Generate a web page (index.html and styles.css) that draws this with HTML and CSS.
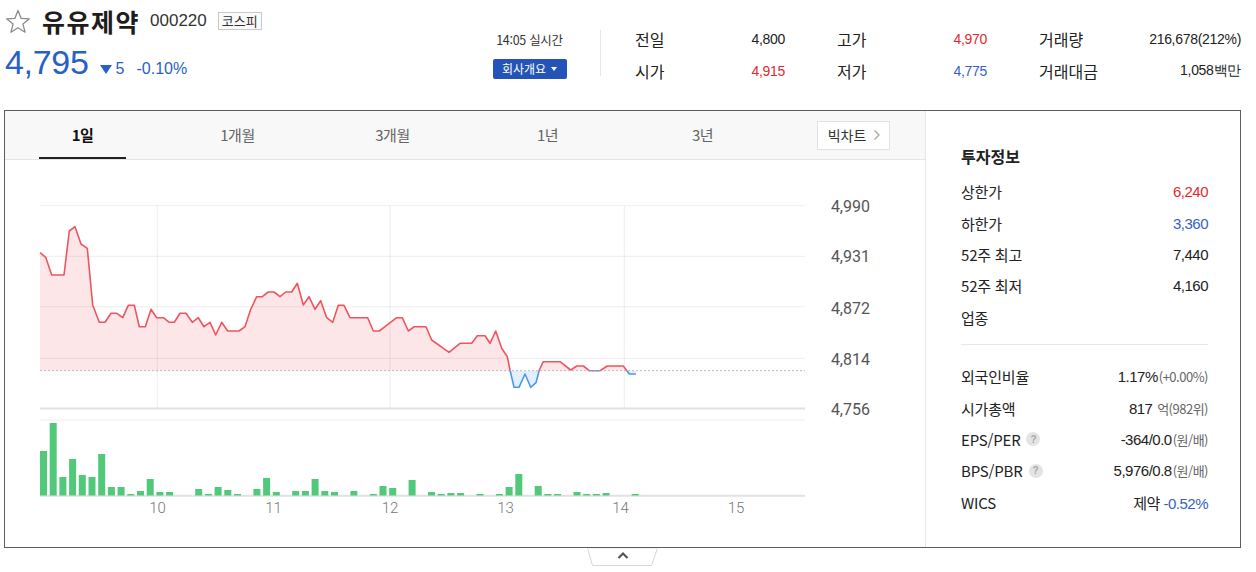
FILE: index.html
```html
<!DOCTYPE html>
<html lang="ko">
<head>
<meta charset="utf-8">
<title>유유제약</title>
<link rel="stylesheet" href="styles.css">
</head>
<body>
<header class="top">
  <div class="ident">
    <div class="name-row">
      <svg class="star" width="26" height="25" viewBox="0 0 26 25"><polygon points="13,1.5 16.06,9.29 24.41,9.79 17.95,15.11 20.05,23.21 13,18.7 5.95,23.21 8.05,15.11 1.59,9.79 9.94,9.29" fill="none" stroke="#8a8a8a" stroke-width="1.3" stroke-linejoin="round"/></svg>
      <h1 class="name">유유제약</h1>
      <span class="code">000220</span>
      <span class="market">코스피</span>
    </div>
    <div class="price-row">
      <span class="price">4,795</span>
      <span class="tri"></span>
      <span class="chg">5</span>
      <span class="rate">-0.10%</span>
    </div>
  </div>
  <div class="rt">
    <div class="time">14:05 실시간</div>
    <button class="corp">회사개요 <span class="caret"></span></button>
  </div>
  <div class="vdiv"></div>
  <div class="stats">
    <div class="stat"><span class="lbl">전일</span><span class="val">4,800</span></div>
    <div class="stat"><span class="lbl">고가</span><span class="val up">4,970</span></div>
    <div class="stat"><span class="lbl">거래량</span><span class="val">216,678(212%)</span></div>
    <div class="stat"><span class="lbl">시가</span><span class="val up">4,915</span></div>
    <div class="stat"><span class="lbl">저가</span><span class="val dn">4,775</span></div>
    <div class="stat"><span class="lbl">거래대금</span><span class="val">1,058백만</span></div>
  </div>
</header>

<section class="panel">
  <div class="chart-col">
    <nav class="tabs">
      <div class="tab on"><span class="tab-label">1일</span></div>
      <div class="tab"><span class="tab-label">1개월</span></div>
      <div class="tab"><span class="tab-label">3개월</span></div>
      <div class="tab"><span class="tab-label">1년</span></div>
      <div class="tab"><span class="tab-label">3년</span></div>
      <button class="big">빅차트 <svg width="8" height="12" viewBox="0 0 8 12"><polyline points="1.5,1.5 6,6 1.5,10.5" fill="none" stroke="#a5a5a5" stroke-width="1.3"/></svg></button>
    </nav>
    <svg class="chart" width="920" height="387" viewBox="5 160 920 387">
      <defs>
        <clipPath id="cu"><rect x="0" y="150" width="930" height="220.7"/></clipPath>
        <clipPath id="cd"><rect x="0" y="370.7" width="930" height="200"/></clipPath>
      </defs>
      <polygon clip-path="url(#cu)" fill="#fde6e8" points="40,370.7 40,252.7 45.7,257.3 51.7,275 64,275 69.3,231 75,226.7 81,244 87.3,248.3 92.7,305 99.3,322.3 105,322.3 111,313.3 116.7,313.3 122.7,317.7 128.3,305.3 134.3,305.3 139.3,326.7 145.3,326.7 151,309.3 156.7,317.7 163.3,317.7 169.3,322.3 174.3,322.3 180,313.3 186,313.3 192.3,322.3 198.3,317.7 204,326.7 210,322.3 215.7,335 221.7,322.3 227.7,331 239,331 245,326.7 250.7,309.3 256.7,296.7 262.3,296.7 268.3,292 274,292 280,296.7 285.7,292 291.7,292 297.3,283.3 303.3,305 309,296.7 315,309.3 320.7,300.7 326.7,317.7 332.7,322.3 338.3,305.3 344,305.3 350,317.7 367.7,317.7 373.3,331 379.3,331 385,326.7 396.7,317.7 402.3,317.7 408.3,331 414.3,326.7 426,326.7 431.7,340 449,352.3 460,343.3 471.7,343.3 477.3,335.7 485,335.7 490,343.3 495.7,331 501.7,348.3 507.3,356.7 510,370 514,387.3 519,387.3 525,374 530.7,387.3 536,382.7 539.3,370 543.3,361.7 560,361.7 570.7,370 576.7,366 583.3,366 589.3,370.7 600,370.7 607.3,366 623.3,366 629.3,374 636,374 636,370.7"/>
      <polygon clip-path="url(#cd)" fill="#e3effc" points="40,370.7 40,252.7 45.7,257.3 51.7,275 64,275 69.3,231 75,226.7 81,244 87.3,248.3 92.7,305 99.3,322.3 105,322.3 111,313.3 116.7,313.3 122.7,317.7 128.3,305.3 134.3,305.3 139.3,326.7 145.3,326.7 151,309.3 156.7,317.7 163.3,317.7 169.3,322.3 174.3,322.3 180,313.3 186,313.3 192.3,322.3 198.3,317.7 204,326.7 210,322.3 215.7,335 221.7,322.3 227.7,331 239,331 245,326.7 250.7,309.3 256.7,296.7 262.3,296.7 268.3,292 274,292 280,296.7 285.7,292 291.7,292 297.3,283.3 303.3,305 309,296.7 315,309.3 320.7,300.7 326.7,317.7 332.7,322.3 338.3,305.3 344,305.3 350,317.7 367.7,317.7 373.3,331 379.3,331 385,326.7 396.7,317.7 402.3,317.7 408.3,331 414.3,326.7 426,326.7 431.7,340 449,352.3 460,343.3 471.7,343.3 477.3,335.7 485,335.7 490,343.3 495.7,331 501.7,348.3 507.3,356.7 510,370 514,387.3 519,387.3 525,374 530.7,387.3 536,382.7 539.3,370 543.3,361.7 560,361.7 570.7,370 576.7,366 583.3,366 589.3,370.7 600,370.7 607.3,366 623.3,366 629.3,374 636,374 636,370.7"/>
      <g class="grid">
        <line x1="40" y1="205.7" x2="805" y2="205.7"/>
        <line x1="40" y1="256.3" x2="805" y2="256.3"/>
        <line x1="40" y1="306.7" x2="805" y2="306.7"/>
        <line x1="40" y1="358.3" x2="805" y2="358.3"/>
        <line x1="157.3" y1="206" x2="157.3" y2="408"/>
        <line x1="390" y1="206" x2="390" y2="408"/>
        <line x1="624.3" y1="206" x2="624.3" y2="408"/>
        <line x1="40" y1="420" x2="805" y2="420"/>
      </g>
      <g class="axis">
        <line x1="40" y1="408.5" x2="805" y2="408.5"/>
        <line x1="40" y1="495.8" x2="805" y2="495.8"/>
      </g>
      <line class="base" x1="40" y1="370.7" x2="805" y2="370.7"/>
      <polyline clip-path="url(#cu)" class="ln-up" points="40,252.7 45.7,257.3 51.7,275 64,275 69.3,231 75,226.7 81,244 87.3,248.3 92.7,305 99.3,322.3 105,322.3 111,313.3 116.7,313.3 122.7,317.7 128.3,305.3 134.3,305.3 139.3,326.7 145.3,326.7 151,309.3 156.7,317.7 163.3,317.7 169.3,322.3 174.3,322.3 180,313.3 186,313.3 192.3,322.3 198.3,317.7 204,326.7 210,322.3 215.7,335 221.7,322.3 227.7,331 239,331 245,326.7 250.7,309.3 256.7,296.7 262.3,296.7 268.3,292 274,292 280,296.7 285.7,292 291.7,292 297.3,283.3 303.3,305 309,296.7 315,309.3 320.7,300.7 326.7,317.7 332.7,322.3 338.3,305.3 344,305.3 350,317.7 367.7,317.7 373.3,331 379.3,331 385,326.7 396.7,317.7 402.3,317.7 408.3,331 414.3,326.7 426,326.7 431.7,340 449,352.3 460,343.3 471.7,343.3 477.3,335.7 485,335.7 490,343.3 495.7,331 501.7,348.3 507.3,356.7 510,370 514,387.3 519,387.3 525,374 530.7,387.3 536,382.7 539.3,370 543.3,361.7 560,361.7 570.7,370 576.7,366 583.3,366 589.3,370.7 600,370.7 607.3,366 623.3,366 629.3,374 636,374"/>
      <polyline clip-path="url(#cd)" class="ln-dn" points="40,252.7 45.7,257.3 51.7,275 64,275 69.3,231 75,226.7 81,244 87.3,248.3 92.7,305 99.3,322.3 105,322.3 111,313.3 116.7,313.3 122.7,317.7 128.3,305.3 134.3,305.3 139.3,326.7 145.3,326.7 151,309.3 156.7,317.7 163.3,317.7 169.3,322.3 174.3,322.3 180,313.3 186,313.3 192.3,322.3 198.3,317.7 204,326.7 210,322.3 215.7,335 221.7,322.3 227.7,331 239,331 245,326.7 250.7,309.3 256.7,296.7 262.3,296.7 268.3,292 274,292 280,296.7 285.7,292 291.7,292 297.3,283.3 303.3,305 309,296.7 315,309.3 320.7,300.7 326.7,317.7 332.7,322.3 338.3,305.3 344,305.3 350,317.7 367.7,317.7 373.3,331 379.3,331 385,326.7 396.7,317.7 402.3,317.7 408.3,331 414.3,326.7 426,326.7 431.7,340 449,352.3 460,343.3 471.7,343.3 477.3,335.7 485,335.7 490,343.3 495.7,331 501.7,348.3 507.3,356.7 510,370 514,387.3 519,387.3 525,374 530.7,387.3 536,382.7 539.3,370 543.3,361.7 560,361.7 570.7,370 576.7,366 583.3,366 589.3,370.7 600,370.7 607.3,366 623.3,366 629.3,374 636,374"/>
      <g class="ylab">
        <text x="870" y="211.5">4,990</text>
        <text x="870" y="261.5">4,931</text>
        <text x="870" y="313.5">4,872</text>
        <text x="870" y="364.5">4,814</text>
        <text x="870" y="414.5">4,756</text>
      </g>
      <g class="vol">
        <rect x="40" y="451" width="7" height="44.5"/>
        <rect x="49.7" y="423" width="7" height="72.5"/>
        <rect x="59.4" y="477" width="7" height="18.5"/>
        <rect x="69.1" y="459" width="7" height="36.5"/>
        <rect x="78.8" y="475" width="7" height="20.5"/>
        <rect x="88.5" y="477" width="7" height="18.5"/>
        <rect x="98.2" y="454" width="7" height="41.5"/>
        <rect x="107.9" y="487" width="7" height="8.5"/>
        <rect x="117.6" y="487" width="7" height="8.5"/>
        <rect x="127.3" y="494" width="7" height="1.5"/>
        <rect x="137" y="491" width="7" height="4.5"/>
        <rect x="146.7" y="479" width="7" height="16.5"/>
        <rect x="156.4" y="492" width="7" height="3.5"/>
        <rect x="166.1" y="492" width="7" height="3.5"/>
        <rect x="195.2" y="489" width="7" height="6.5"/>
        <rect x="204.9" y="494" width="7" height="1.5"/>
        <rect x="214.6" y="487" width="7" height="8.5"/>
        <rect x="224.3" y="490" width="7" height="5.5"/>
        <rect x="234" y="494" width="7" height="1.5"/>
        <rect x="253.4" y="489" width="7" height="6.5"/>
        <rect x="263.1" y="478" width="7" height="17.5"/>
        <rect x="272.8" y="492" width="7" height="3.5"/>
        <rect x="292.2" y="491" width="7" height="4.5"/>
        <rect x="301.9" y="491" width="7" height="4.5"/>
        <rect x="311.6" y="479" width="7" height="16.5"/>
        <rect x="321.3" y="491" width="7" height="4.5"/>
        <rect x="331" y="492" width="7" height="3.5"/>
        <rect x="350.4" y="491" width="7" height="4.5"/>
        <rect x="369.8" y="494" width="7" height="1.5"/>
        <rect x="379.5" y="486" width="7" height="9.5"/>
        <rect x="389.2" y="488" width="7" height="7.5"/>
        <rect x="408.6" y="480" width="7" height="15.5"/>
        <rect x="428" y="492" width="7" height="3.5"/>
        <rect x="437.7" y="494" width="7" height="1.5"/>
        <rect x="447.4" y="493" width="7" height="2.5"/>
        <rect x="457.1" y="493" width="7" height="2.5"/>
        <rect x="476.5" y="494" width="7" height="1.5"/>
        <rect x="495.9" y="494" width="7" height="1.5"/>
        <rect x="505.6" y="487" width="7" height="8.5"/>
        <rect x="515.3" y="474" width="7" height="21.5"/>
        <rect x="534.7" y="486" width="7" height="9.5"/>
        <rect x="544.4" y="494" width="7" height="1.5"/>
        <rect x="554.1" y="494" width="7" height="1.5"/>
        <rect x="573.5" y="492" width="7" height="3.5"/>
        <rect x="583.2" y="494" width="7" height="1.5"/>
        <rect x="592.9" y="494" width="7" height="1.5"/>
        <rect x="602.6" y="493" width="7" height="2.5"/>
        <rect x="631.7" y="494" width="7" height="1.5"/>
      </g>
      <g class="xlab">
        <text x="157.5" y="512.5">10</text>
        <text x="273.5" y="512.5">11</text>
        <text x="390" y="512.5">12</text>
        <text x="505.5" y="512.5">13</text>
        <text x="620.5" y="512.5">14</text>
        <text x="736" y="512.5">15</text>
      </g>
    </svg>
  </div>
  <aside class="info">
    <h2 class="info-title">투자정보</h2>
    <ul class="rows">
      <li class="row"><span class="k">상한가</span><span class="v up">6,240</span></li>
      <li class="row"><span class="k">하한가</span><span class="v dn">3,360</span></li>
      <li class="row"><span class="k">52주 최고</span><span class="v">7,440</span></li>
      <li class="row"><span class="k">52주 최저</span><span class="v">4,160</span></li>
      <li class="row"><span class="k">업종</span><span class="v"></span></li>
    </ul>
    <div class="sep"></div>
    <ul class="rows">
      <li class="row"><span class="k">외국인비율</span><span class="v">1.17%<small>(+0.00%)</small></span></li>
      <li class="row"><span class="k">시가총액</span><span class="v">817 <small>억(982위)</small></span></li>
      <li class="row"><span class="k">EPS/PER <span class="help">?</span></span><span class="v">-364/0.0<small>(원/배)</small></span></li>
      <li class="row"><span class="k">BPS/PBR <span class="help">?</span></span><span class="v">5,976/0.8<small>(원/배)</small></span></li>
      <li class="row"><span class="k">WICS</span><span class="v"><span class="kr">제약</span> <span class="dn">-0.52%</span></span></li>
    </ul>
  </aside>
</section>
<div class="toggle-wrap">
  <svg class="toggle" width="72" height="19" viewBox="0 0 72 19"><polygon points="0.5,0 70.5,0 64.5,17.5 5.5,17.5" fill="#fff" stroke="#d6d6d6" stroke-width="1"/><line x1="0" y1="0" x2="72" y2="0" stroke="#fff" stroke-width="1"/><polyline points="31.5,10 36,5.5 40.5,10" fill="none" stroke="#555" stroke-width="2.2"/></svg>
</div>
</body>
</html>
```

FILE: styles.css
```css
* { box-sizing: border-box; }
body {
  margin: 0;
  width: 1256px;
  background: #fff;
  color: #222;
  font-family: "Noto Sans CJK KR", "Noto Sans", sans-serif;
}
h1, h2, ul { margin: 0; padding: 0; }
ul { list-style: none; }
button { font-family: inherit; cursor: pointer; }

/* header */
.top {
  display: flex;
  height: 110px;
}
.ident {
  width: 492px;
  padding-left: 5px;
  padding-top: 6px;
}
.name-row {
  display: flex;
  align-items: center;
  height: 30px;
}
.star { margin-right: 11px; }
.name {
  font-size: 25px;
  font-weight: 700;
  line-height: 30px;
  color: #1d1d1d;
  letter-spacing: 1.5px;
}
.code {
  margin-left: 10px;
  font-family: "Liberation Sans", Arial, sans-serif;
  font-size: 17px;
  color: #333;
  line-height: 30px;
}
.market {
  margin-left: 11px;
  border: 1px solid #c9c9c9;
  padding: 0 3px;
  font-size: 13px;
  line-height: 16px;
  color: #333;
  background: #fafafa;
}
.price-row {
  display: flex;
  align-items: baseline;
  margin-top: 8px;
  height: 38px;
  color: #2761c8;
  font-family: "Liberation Sans", Arial, sans-serif;
}
.price {
  font-size: 34px;
  line-height: 36px;
  letter-spacing: -0.3px;
}
.tri {
  display: inline-block;
  width: 0;
  height: 0;
  margin-left: 11px;
  border-left: 6px solid transparent;
  border-right: 6px solid transparent;
  border-top: 9px solid #2761c8;
}
.chg {
  margin-left: 4px;
  font-size: 16px;
}
.rate {
  margin-left: 12px;
  font-size: 16px;
}
.rt {
  width: 75px;
  padding-top: 31px;
  display: flex;
  flex-direction: column;
  align-items: center;
}
.time {
  font-size: 12.5px;
  line-height: 18px;
  color: #333;
  letter-spacing: -0.3px;
  white-space: nowrap;
}
.corp {
  margin-top: 10px;
  width: 74px;
  height: 20px;
  border: 0;
  border-radius: 2px;
  background: #2454b8;
  color: #fff;
  font-size: 12px;
  line-height: 20px;
  padding: 0;
  display: flex;
  align-items: center;
  justify-content: center;
  gap: 5px;
}
.caret {
  display: inline-block;
  width: 0;
  height: 0;
  border-left: 3px solid transparent;
  border-right: 3px solid transparent;
  border-top: 4px solid #fff;
}
.vdiv {
  margin-left: 33px;
  margin-top: 30px;
  width: 1px;
  height: 46px;
  background: #e6e6e6;
}
.stats {
  margin-left: 34px;
  padding-top: 23px;
  display: grid;
  grid-template-columns: 150px 150px 202px;
  grid-auto-rows: 32px;
  column-gap: 52px;
  align-content: start;
}
.stat {
  display: flex;
  justify-content: space-between;
  align-items: center;
}
.lbl {
  font-size: 16px;
  line-height: 32px;
  color: #222;
}
.val {
  font-family: "Liberation Sans", Arial, sans-serif;
  font-size: 14px;
  letter-spacing: -0.3px;
  color: #222;
  white-space: nowrap;
}
.up, .val.up, .v.up { color: #e02a2f; }
.dn, .val.dn, .v.dn { color: #3660c6; }

/* panel */
.panel {
  margin-left: 4px;
  width: 1237px;
  height: 438px;
  border: 1px solid #5c5c5c;
  display: flex;
}
.chart-col {
  width: 920px;
  display: flex;
  flex-direction: column;
}
.tabs {
  height: 49px;
  display: flex;
  align-items: center;
  background: #f8f8f8;
  border-bottom: 1px solid #e4e4e4;
}
.tab {
  width: 155px;
  height: 48px;
  display: flex;
  justify-content: center;
}
.tab-label {
  width: 87px;
  height: 48px;
  line-height: 48px;
  text-align: center;
  font-size: 15px;
  color: #666;
  border-bottom: 2px solid transparent;
  letter-spacing: -0.5px;
}
.tab.on .tab-label {
  color: #111;
  font-weight: 700;
  border-bottom-color: #222;
}
.big {
  margin-left: 37px;
  width: 73px;
  height: 29px;
  background: #fff;
  border: 1px solid #e2e2e2;
  font-size: 14px;
  color: #333;
  display: flex;
  align-items: center;
  justify-content: center;
  gap: 7px;
  padding: 0 0 0 2px;
}
.chart { display: block; }
.grid line { stroke: rgba(0,0,0,0.07); stroke-width: 1; }
.axis line { stroke: #e2e2e2; stroke-width: 2; }
.base { stroke: #b9b9b9; stroke-width: 1; stroke-dasharray: 2 2; }
.ln-up, .ln-dn { fill: none; stroke-width: 1.6; stroke-linejoin: round; }
.ln-up { stroke: #ee5560; }
.ln-dn { stroke: #4a98ee; }
.ylab text {
  font-family: Roboto, "Liberation Sans", sans-serif;
  font-size: 16px;
  fill: #555;
  text-anchor: end;
}
.xlab text {
  font-family: Roboto, "Liberation Sans", sans-serif;
  font-weight: 300;
  font-size: 15px;
  fill: #777;
  text-anchor: middle;
}
.vol rect { fill: #52c97a; }

/* info */
.info {
  flex: 1;
  border-left: 1px solid #e6e6e6;
  padding: 33px 32px 0 35px;
}
.info-title {
  font-size: 16px;
  font-weight: 700;
  line-height: 24px;
  color: #222;
  margin-bottom: 8px;
}
.row {
  display: flex;
  justify-content: space-between;
  align-items: center;
  height: 31.4px;
}
.k {
  font-size: 15px;
  color: #222;
  display: flex;
  align-items: center;
  letter-spacing: -0.2px;
}
.v {
  font-family: "Liberation Sans", Arial, sans-serif;
  font-size: 15px;
  letter-spacing: -0.5px;
  color: #222;
  white-space: nowrap;
}
.v small {
  font-family: "Noto Sans CJK KR", sans-serif;
  font-size: 13px;
  color: #666;
  letter-spacing: -0.5px;
  margin-left: 1px;
}
.v .kr {
  font-family: "Noto Sans CJK KR", sans-serif;
  font-size: 15px;
}
.help {
  display: inline-flex;
  align-items: center;
  justify-content: center;
  margin-left: 6px;
  width: 14px;
  height: 14px;
  border-radius: 50%;
  background: #e4e4e4;
  color: #a8a8a8;
  font-size: 10px;
  font-weight: 700;
  font-family: "Liberation Sans", Arial, sans-serif;
}
.sep {
  margin-top: 11px;
  margin-bottom: 16px;
  height: 1px;
  background: #e8e8e8;
}
.toggle-wrap {
  margin-left: 4px;
  width: 1237px;
  display: flex;
  justify-content: center;
}
.toggle { display: block; }
```
